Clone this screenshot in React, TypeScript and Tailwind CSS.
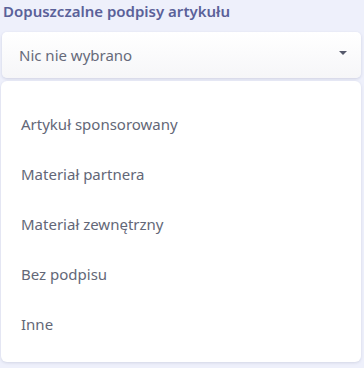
export default function App() {
  const items = [
    "Artykuł sponsorowany",
    "Materiał partnera",
    "Materiał zewnętrzny",
    "Bez podpisu",
    "Inne",
  ];

  return (
    <div
      className="w-[364px] h-[368px] overflow-hidden bg-[#eef0fb] px-[2px]"
      style={{ fontFamily: '"Noto Sans", "Open Sans", sans-serif' }}
    >
      {/* Label */}
      <div className="pl-[1px] text-[15px] font-semibold text-[#5a6199] leading-[22px]">
        Dopuszczalne podpisy artykułu
      </div>

      {/* Select */}
      <div className="mt-[10px] h-[46px] w-[359px] rounded-[5px] bg-gradient-to-b from-white to-[#f6f6f8] shadow-[0_1px_3px_rgba(60,64,110,0.18)] flex items-center justify-between pl-[17px] pr-[14px]">
        <span className="text-[15px] text-[#666a7a]">Nic nie wybrano</span>
        <span className="w-0 h-0 border-l-[4px] border-r-[4px] border-t-[4px] border-l-transparent border-r-transparent border-t-[#55596b] mb-[4px]" />
      </div>

      {/* Menu */}
      <div className="mt-[3px] w-[360px] h-[281px] -ml-[1px] rounded-[6px] bg-white shadow-[0_1px_3px_rgba(60,64,110,0.15)] pt-[18px]">
        {items.map((item) => (
          <div
            key={item}
            className="h-[50px] flex items-center pl-[20px] text-[15px] text-[#636777]"
          >
            {item}
          </div>
        ))}
      </div>
    </div>
  );
}
